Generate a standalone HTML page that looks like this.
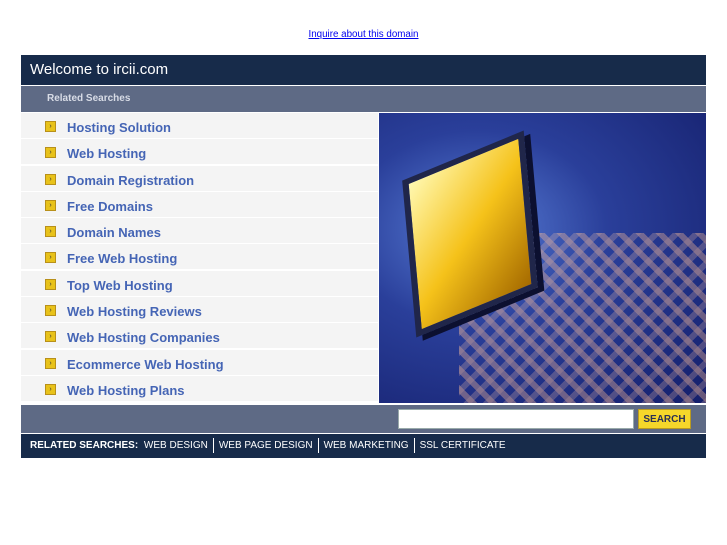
<!DOCTYPE html>
<html><head><style>
body{margin:0;background:#fff;font-family:"Liberation Sans",sans-serif;width:727px;height:545px;position:relative;overflow:hidden}
.top{position:absolute;top:29px;left:0;width:727px;text-align:center;font-size:9.8px}
.top a{color:#00e;text-decoration:underline}
.hdr{position:absolute;left:21px;top:55px;width:685px;height:30px;background:#172b4a;color:#fff;font-size:15px;line-height:30px;text-indent:9px}
.rel{position:absolute;left:21px;top:86px;width:685px;height:26px;background:#5e6a85;color:#d8dce6;font-size:10px;font-weight:bold;line-height:25px;text-indent:26px}
.list{position:absolute;left:21px;top:113px;width:357px}
.row{height:25px;margin-bottom:1.3px;background:#f4f4f4;position:relative}
.row i{position:absolute;left:24px;top:8px;width:9px;height:9px;background:#e8c21a;border:1px solid #b8901a;font-style:normal;font-size:7px;line-height:9px;text-align:center;color:#333}
.row span{position:absolute;left:46px;top:7px;font-size:13px;font-weight:bold;color:#4565b5}
.img{position:absolute;left:379px;top:113px;width:327px;height:290px;overflow:hidden;background:radial-gradient(ellipse at 30% 40%,#5a7fd8 0%,#2a3f9a 40%,#141e6a 100%)}
.mon{position:absolute;left:30px;top:40px;width:110px;height:150px;background:linear-gradient(135deg,#fff8b0,#f5c21a 50%,#a56a00);transform:skewY(-18deg) rotate(-5deg);border:6px solid #20264a;box-shadow:6px 6px 0 #0c1030}
.tiles{position:absolute;left:80px;top:120px;width:260px;height:180px;background:repeating-linear-gradient(45deg,rgba(255,190,150,.6) 0 6px,transparent 6px 14px),repeating-linear-gradient(-45deg,rgba(255,200,170,.4) 0 6px,transparent 6px 14px);opacity:.6}
.sbar{position:absolute;left:21px;top:405px;width:685px;height:28px;background:#5e6a85}
.sbar .in{position:absolute;left:377px;top:4px;width:234px;height:18px;background:#fff;border:1px solid #9aa}
.sbar .btn{position:absolute;left:617px;top:4px;width:51px;height:18px;background:#f5d72a;border:1px solid #b99a20;font-size:10px;font-weight:bold;color:#2a2f55;text-align:center;line-height:20px}
.bot{position:absolute;left:21px;top:434px;width:685px;height:24px;background:#172b4a;color:#fff;font-size:10px;line-height:23px}
.bot b{margin-left:9px;margin-right:3px}
.bot .s{display:inline-block;width:1px;height:15px;background:#fff;vertical-align:middle;margin:0 5px}
</style></head><body>
<div class="top"><a>Inquire about this domain</a></div>
<div class="hdr">Welcome to ircii.com</div>
<div class="rel">Related Searches</div>
<div class="list">
<div class="row"><i>›</i><span>Hosting Solution</span></div>
<div class="row"><i>›</i><span>Web Hosting</span></div>
<div class="row"><i>›</i><span>Domain Registration</span></div>
<div class="row"><i>›</i><span>Free Domains</span></div>
<div class="row"><i>›</i><span>Domain Names</span></div>
<div class="row"><i>›</i><span>Free Web Hosting</span></div>
<div class="row"><i>›</i><span>Top Web Hosting</span></div>
<div class="row"><i>›</i><span>Web Hosting Reviews</span></div>
<div class="row"><i>›</i><span>Web Hosting Companies</span></div>
<div class="row"><i>›</i><span>Ecommerce Web Hosting</span></div>
<div class="row"><i>›</i><span>Web Hosting Plans</span></div>
</div>
<div class="img"><div class="tiles"></div><div class="mon"></div></div>
<div class="sbar"><div class="in"></div><div class="btn">SEARCH</div></div>
<div class="bot"><b>RELATED SEARCHES:</b> WEB DESIGN<span class="s"></span>WEB PAGE DESIGN<span class="s"></span>WEB MARKETING<span class="s"></span>SSL CERTIFICATE</div>
</body></html>
